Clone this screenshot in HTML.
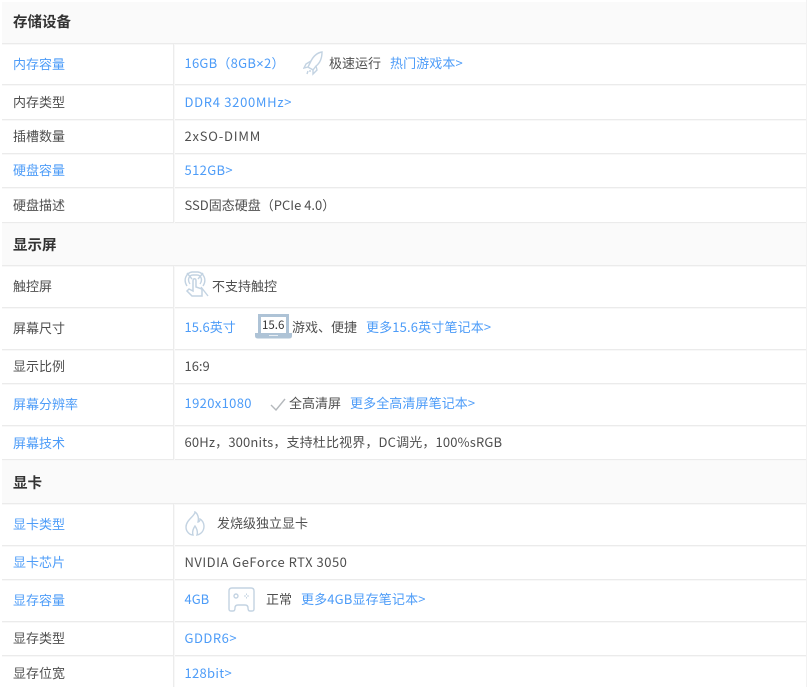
<!DOCTYPE html>
<html lang="zh">
<head>
<meta charset="utf-8">
<style>
html,body{margin:0;padding:0;background:#fff;}
body{width:808px;height:687px;overflow:hidden;position:relative;font-family:"Noto Sans CJK SC","Liberation Sans",sans-serif;font-size:13px;color:#4f4f4f;}
.h,.l,.v,.t,svg{position:absolute;}
.h{left:2px;width:804px;background:#fafafa;}
.l{left:2px;width:804px;height:1px;background:#ebebeb;box-shadow:0 1px 0 #f8f8f8;}
.v{left:173px;width:1px;background:#ececec;box-shadow:1px 0 0 #f8f8f8;}
.t{white-space:nowrap;line-height:18px;filter:blur(.3px);}
.b{color:#4d9cf8;}
.ti{font-size:14.5px;font-weight:700;color:#333;left:13px;}
.k{left:13px;}
.c{left:184.5px;}
.x{font-family:"Liberation Sans",sans-serif;}
svg{fill:none;stroke:#c3d3e2;stroke-width:1.4;}
</style>
</head>
<body>
<div class="h" style="top:2px;height:41px"></div>
<div class="h" style="top:223px;height:42px"></div>
<div class="h" style="top:461px;height:42px"></div>

<div class="l" style="top:43px"></div>
<div class="l" style="top:84px"></div>
<div class="l" style="top:119px"></div>
<div class="l" style="top:153px"></div>
<div class="l" style="top:187px"></div>
<div class="l" style="top:222px"></div>
<div class="l" style="top:265px"></div>
<div class="l" style="top:307px"></div>
<div class="l" style="top:349px"></div>
<div class="l" style="top:383px"></div>
<div class="l" style="top:425px"></div>
<div class="l" style="top:459px"></div>
<div class="l" style="top:503px"></div>
<div class="l" style="top:545px"></div>
<div class="l" style="top:579px"></div>
<div class="l" style="top:621px"></div>
<div class="l" style="top:655px"></div>

<div class="v" style="top:44px;height:179px"></div>
<div class="v" style="top:266px;height:194px"></div>
<div class="v" style="top:504px;height:183px"></div>
<div style="position:absolute;left:806px;top:0;width:1px;height:687px;background:#f2f2f2"></div>

<div class="t ti" style="top:13px">存储设备</div>
<div class="t k b" style="top:55px">内存容量</div>
<div class="t c b" style="top:54px;letter-spacing:.25px">16GB（8GB<span class="x">×</span>2）</div>
<svg style="left:303px;top:50px" width="21" height="26" viewBox="0 0 21 26"><path d="M19 2 C13 3 10 7 8 11 L5 17 C6 18 9 19 10 20 L13 16 C17 13 19 8 19 2Z"/><path d="M8 11 L3 14 L1 18 L5 17M13 16 L14 20 L10 24 L10 20M5 21 L4 24M7 20 L7 22"/></svg>
<div class="t" style="left:329px;top:54px">极速运行</div>
<div class="t b" style="left:390px;top:54px;letter-spacing:.1px">热门游戏本&gt;</div>

<div class="t k" style="top:93px">内存类型</div>
<div class="t c b" style="top:93px;letter-spacing:.7px">DDR4 3200MHz&gt;</div>
<div class="t k" style="top:127px">插槽数量</div>
<div class="t c" style="top:127px;letter-spacing:.8px">2xSO-DIMM</div>
<div class="t k b" style="top:161px">硬盘容量</div>
<div class="t c b" style="top:161px;letter-spacing:.35px">512GB&gt;</div>
<div class="t k" style="top:196px">硬盘描述</div>
<div class="t c" style="top:196px">SSD固态硬盘（PCIe 4.0）</div>

<div class="t ti" style="top:236px">显示屏</div>
<div class="t k" style="top:277px">触控屏</div>
<svg style="left:184px;top:271px" width="25" height="26" viewBox="0 0 25 26"><path d="M3 15 C-1 9 2 2 8 1 H14 C20 2 23 9 19 15M6 13 C3 9 5 4 9 4 H13 C17 4 19 9 16 13M3 2 L8 8M19 2 L14 8"/><path d="M9 10 C9 7 12 7 12 10 V16 L18 18 L18 25 H8 L3 20 L5 18 L9 20Z" stroke-width="1.500"/><path d="M17 16 L24 25"/></svg>
<div class="t" style="left:212px;top:277px">不支持触控</div>
<div class="t k" style="top:319px">屏幕尺寸</div>
<div class="t c b" style="top:318px">15.6英寸</div>
<svg style="left:255px;top:314px" width="37" height="25" viewBox="0 0 37 25"><path d="M4.500 20 V1.500 H32.500 V20" stroke-width="3" stroke="#aec3d6"/><path d="M0 19 H37 V22 Q37 24.500 34 24.500 H3 Q0 24.500 0 22Z" fill="#aec3d6" stroke="none"/><path d="M14 21.500 H23" stroke="#e8eef4" stroke-width="1"/></svg>
<div class="t" style="left:262px;top:316px;font-size:11.5px;color:#333">15.6</div>
<div class="t" style="left:292px;top:318px">游戏、便捷</div>
<div class="t b" style="left:366px;top:318px;letter-spacing:.15px">更多15.6英寸笔记本&gt;</div>

<div class="t k" style="top:357px">显示比例</div>
<div class="t c" style="top:357px">16:9</div>
<div class="t k b" style="top:395px">屏幕分辨率</div>
<div class="t c b" style="top:394px;letter-spacing:.35px">1920x1080</div>
<svg style="left:270px;top:398px" width="16" height="13" viewBox="0 0 16 13"><path d="M1 7 L6 12 L15 1" stroke="#b4b8bc"/></svg>
<div class="t" style="left:289px;top:394px">全高清屏</div>
<div class="t b" style="left:350px;top:394px;letter-spacing:.1px">更多全高清屏笔记本&gt;</div>
<div class="t k b" style="top:434px">屏幕技术</div>
<div class="t c" style="top:433px;letter-spacing:.15px">60Hz，300nits，支持杜比视界，DC调光，100%sRGB</div>

<div class="t ti" style="top:474px">显卡</div>
<div class="t k b" style="top:515px">显卡类型</div>
<svg style="left:185px;top:511px" width="20" height="25" viewBox="0 0 20 25" stroke-width="1.600"><path d="M10 1 C10 5 1 9 1 16 C1 21 5 24 8 24 C7 21 8 18 10 15 C12 18 13 21 12 24 C16 23 19 20 19 15 C19 12 17 9 15 8 C15 10 14 11 13 11 C14 7 13 3 10 1Z"/></svg>
<div class="t" style="left:217px;top:514px">发烧级独立显卡</div>
<div class="t k b" style="top:553px">显卡芯片</div>
<div class="t c" style="top:553px;letter-spacing:.5px">NVIDIA GeForce RTX 3050</div>
<div class="t k b" style="top:591px">显存容量</div>
<div class="t c b" style="top:590px">4GB</div>
<svg style="left:228px;top:587px" width="27" height="25" viewBox="0 0 27 25" stroke-width="1.600"><path d="M4 1 H23 Q26 1 26 4 V22 Q26 24 24 24 H22 Q20 24 20 21 Q20 18 17 18 H10 Q7 18 7 21 Q7 24 5 24 H3 Q1 24 1 22 V4 Q1 1 4 1Z"/><circle cx="8" cy="9" r="2"/><path d="M16 9 h2M19 9 h2M18.500 6.500 v1.500M18.500 10 v1.500" stroke-width="1"/></svg>
<div class="t" style="left:266px;top:590px">正常</div>
<div class="t b" style="left:301px;top:590px;letter-spacing:.15px">更多4GB显存笔记本&gt;</div>
<div class="t k" style="top:629px">显存类型</div>
<div class="t c b" style="top:629px;letter-spacing:.5px">GDDR6&gt;</div>
<div class="t k" style="top:664px">显存位宽</div>
<div class="t c b" style="top:664px;letter-spacing:.3px">128bit&gt;</div>
</body>
</html>
